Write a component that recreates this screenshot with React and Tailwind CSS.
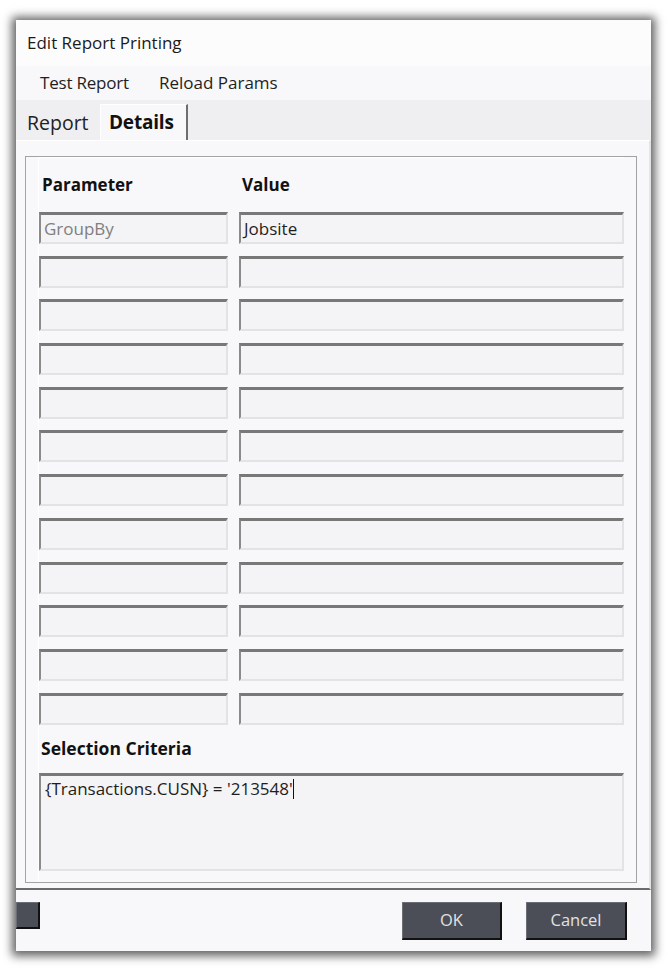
import React from "react";

const font = { fontFamily: '"Open Sans", "Noto Sans", sans-serif' };

const rows = [
  { param: "GroupBy", value: "Jobsite" },
  ...Array.from({ length: 11 }, () => ({ param: "", value: "" })),
];

const Field = ({ text, muted, className }) => (
  <div
    className={`h-[32px] flex items-center bg-[#f4f3f5] border-t-[3px] border-l-[2px] border-t-[#787878] border-l-[#8a8a8a] border-r-2 border-b-2 border-r-[#e3e2e4] border-b-[#e3e2e4] pl-[3px] text-[17px] ${
      muted ? "text-[#808080]" : "text-[#1e1e1e]"
    } ${className}`}
  >
    {text}
  </div>
);

const DarkButton = ({ children, className }) => (
  <button
    className={`bg-[#4b4e56] text-[#e2e2e2] text-[16.5px] border-t border-l border-[#6b6e75] border-r-2 border-b-2 border-r-[#111] border-b-[#111] ${className}`}
  >
    {children}
  </button>
);

export default function App() {
  return (
    <div className="min-h-[971px] bg-white pl-[16px] pt-[20px]" style={font}>
      <div className="w-[635px] h-[931px] flex flex-col bg-[#f8f7f9] shadow-[0_1px_9px_4px_rgba(0,0,0,0.62)]">
        {/* title */}
        <div className="h-[46px] flex items-center pl-[11px] bg-[#fdfcfd] text-[17px] text-[#1a1a1a]">
          Edit Report Printing
        </div>

        {/* menu */}
        <div className="h-[34px] flex items-center pl-[24px] gap-[30px] bg-[#f8f7f9] text-[17px] text-[#1f1f1f]">
          <span className="tracking-[-0.2px]">Test Report</span>
          <span>Reload Params</span>
        </div>

        {/* tabs */}
        <div className="h-[40px] flex items-end bg-[#efeef0]">
          <div className="w-[84px] h-[34px] flex items-center pl-[11px] text-[19.5px] text-[#222]">
            Report
          </div>
          <div className="h-[36px] w-[88px] flex items-center pl-[8px] bg-[#f8f7f9] border-t border-l border-t-[#fff] border-l-[#fff] border-r-2 border-r-[#6e6e6e] text-[19px] font-bold tracking-[-0.2px] text-[#111]">
            Details
          </div>
        </div>

        {/* tab page */}
        <div className="h-[750px] flex flex-col bg-[#f8f7f9] border-t border-t-[#ffffff] border-r-2 border-r-[#e4e3e5] border-b-2 border-b-[#6a6a6a] pl-[9px] pr-[12px] pt-[15px] pb-[5px]">
          <div className="flex-1 flex flex-col border border-[#a3a3a3] px-[12px]">
            <div className="flex-1 flex flex-col border-t border-l border-white">
              <div className="h-[54px] flex items-center gap-[11px] text-[17px] font-bold text-[#111]">
                <div className="w-[189px] pl-[3px]">Parameter</div>
                <div className="pl-[3px]">Value</div>
              </div>
              <div className="flex flex-col gap-[11.7px]">
                {rows.map((r, i) => (
                  <div key={i} className="flex gap-[11px]">
                    <Field text={r.param} muted className="w-[189px]" />
                    <Field text={r.value} className="flex-1" />
                  </div>
                ))}
              </div>
              <div className="h-[48px] flex items-center pl-[2px] text-[17.5px] font-bold text-[#111]">
                Selection Criteria
              </div>
              <div className="h-[98px] bg-[#f4f3f5] border-t-[3px] border-l-[2px] border-t-[#787878] border-l-[#8a8a8a] border-r-2 border-b-2 border-r-[#e3e2e4] border-b-[#e3e2e4] pl-[4px] pt-[1px] text-[17px] text-[#1e1e1e] leading-[24px]">
                {"{Transactions.CUSN} = '213548'"}
                <span className="inline-block w-[1.5px] h-[20px] bg-[#111] align-middle -mt-[2px]" />
              </div>
            </div>
          </div>
        </div>

        {/* footer */}
        <div className="flex-1 flex items-start justify-between pt-[12px] pr-[24px]">
          <DarkButton className="w-[24px] h-[27px]" />
          <div className="flex gap-[24px]">
            <DarkButton className="w-[100px] h-[38px]">OK</DarkButton>
            <DarkButton className="w-[101px] h-[38px]">Cancel</DarkButton>
          </div>
        </div>
      </div>
    </div>
  );
}
